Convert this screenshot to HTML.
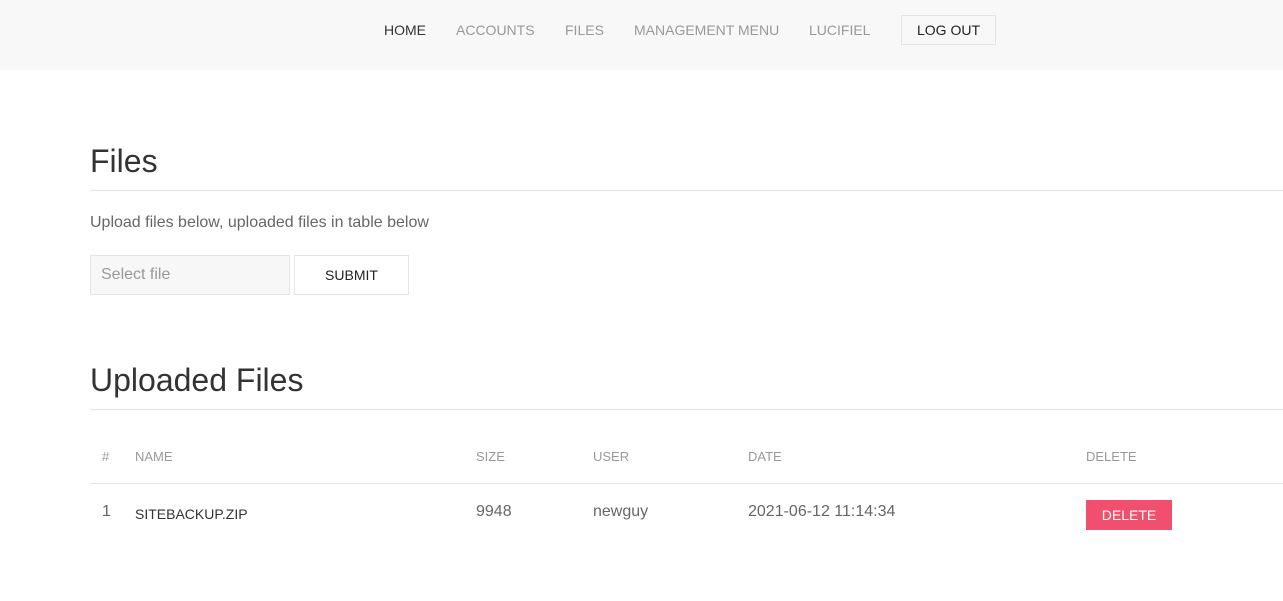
<!DOCTYPE html>
<html><head><meta charset="utf-8"><style>
*{margin:0;padding:0;box-sizing:border-box}
body{width:1283px;height:601px;overflow:hidden;background:#fff;font-family:"Liberation Sans",sans-serif;position:relative;color:#555}
.nav{position:absolute;left:0;top:0;width:1283px;height:70px;background:#f8f8f8}
.nav span{position:absolute;top:22px;font-size:14px;color:#999;line-height:16px}
.lo{position:absolute;left:901px;top:15px;width:95px;height:30px;border:1px solid #e3e3e3;font-size:14px;color:#222;text-align:center;line-height:28px}
.a{position:absolute;white-space:nowrap}
h1{font-weight:normal;color:#333;font-size:32px}
.hr{position:absolute;left:90px;width:1193px;height:1px;background:#e5e5e5}
th{}
.th{font-size:13px;color:#999;top:449px}
.td{font-size:16px;color:#666;top:503px}
</style></head><body>
<div class="nav">
<span style="left:384px;color:#333">HOME</span>
<span style="left:456px">ACCOUNTS</span>
<span style="left:565px">FILES</span>
<span style="left:634px">MANAGEMENT MENU</span>
<span style="left:809px">LUCIFIEL</span>
<div class="lo">LOG OUT</div>
</div>
<h1 class="a" style="left:90px;top:143px">Files</h1>
<div class="hr" style="top:190px"></div>
<div class="a" style="left:90px;top:214px;font-size:16px;color:#666">Upload files below, uploaded files in table below</div>
<div class="a" style="left:90px;top:255px;width:200px;height:40px;background:#f7f7f7;border:1px solid #e5e5e5;font-size:16px;color:#999;padding-left:10px;line-height:38px">Select file</div>
<div class="a" style="left:294px;top:255px;width:115px;height:40px;border:1px solid #e5e5e5;font-size:14px;color:#222;text-align:center;line-height:38px">SUBMIT</div>
<h1 class="a" style="left:90px;top:362px">Uploaded Files</h1>
<div class="hr" style="top:409px"></div>
<div class="a th" style="left:102px">#</div>
<div class="a th" style="left:135px">NAME</div>
<div class="a th" style="left:476px">SIZE</div>
<div class="a th" style="left:593px">USER</div>
<div class="a th" style="left:748px">DATE</div>
<div class="a th" style="left:1086px">DELETE</div>
<div class="hr" style="top:483px"></div>
<div class="a td" style="left:102px">1</div>
<div class="a" style="left:135px;top:506px;font-size:14px;color:#333">SITEBACKUP.ZIP</div>
<div class="a td" style="left:476px">9948</div>
<div class="a td" style="left:593px">newguy</div>
<div class="a td" style="left:748px">2021-06-12 11:14:34</div>
<div class="a" style="left:1086px;top:500px;width:86px;height:30px;background:#f0506e;color:#fff;font-size:14px;text-align:center;line-height:30px">DELETE</div>
</body></html>
